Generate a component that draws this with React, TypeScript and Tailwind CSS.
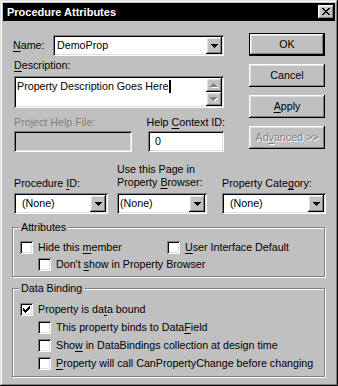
import React from 'react';

const raised =
  'shadow-[inset_-1px_-1px_0_#000,inset_1px_1px_0_#fff,inset_-2px_-2px_0_#808080,inset_2px_2px_0_#dfdfdf]';
const sunken =
  'shadow-[inset_1px_1px_0_#808080,inset_-1px_-1px_0_#fff,inset_2px_2px_0_#000,inset_-2px_-2px_0_#dfdfdf]';
const etched = 'border border-[#808080] shadow-[1px_1px_0_#fff,inset_1px_1px_0_#fff]';

function U({ children }: { children: React.ReactNode }) {
  return <span className="underline decoration-1 underline-offset-[2px]">{children}</span>;
}

function ArrowDown({ color = '#000' }: { color?: string }) {
  return (
    <svg width="7" height="4" viewBox="0 0 7 4" shapeRendering="crispEdges">
      <path d="M0 0h7v1H0zM1 1h5v1H1zM2 2h3v1H2zM3 3h1v1H3z" fill={color} />
    </svg>
  );
}

function GrayArrow({ up }: { up?: boolean }) {
  const d = up ? 'M3 0h1v1H3zM2 1h3v1H2zM1 2h5v1H1zM0 3h7v1H0z' : 'M0 0h7v1H0zM1 1h5v1H1zM2 2h3v1H2zM3 3h1v1H3z';
  return (
    <svg width="8" height="5" viewBox="0 0 8 5" shapeRendering="crispEdges">
      <path d={d} fill="#fff" transform="translate(1 1)" />
      <path d={d} fill="#808080" />
    </svg>
  );
}

function Combo({ value, className, textClass }: { value: string; className: string; textClass: string }) {
  return (
    <div className={`flex h-[21px] bg-white p-[2px] ${sunken} ${className}`}>
      <div className={`flex flex-1 items-center ${textClass}`}>{value}</div>
      <div className={`flex w-[16px] items-center justify-center bg-[#c0c0c0] ${raised}`}>
        <ArrowDown />
      </div>
    </div>
  );
}

function Check({ checked, children, className = '' }: { checked?: boolean; children: React.ReactNode; className?: string }) {
  return (
    <div className={`flex h-[17px] items-center ${className}`}>
      <div className={`flex h-[13px] w-[13px] shrink-0 items-center justify-center bg-white ${sunken}`}>
        {checked && (
          <svg width="7" height="7" viewBox="0 0 7 7" shapeRendering="crispEdges">
            <path
              d="M6 0h1v1H6zM5 1h2v1H5zM0 2h1v1H0zM4 2h3v1H4zM0 3h2v1H0zM3 3h3v1H3zM0 4h5v1H0zM1 5h3v1H1zM2 6h1v1H2z"
              fill="#000"
            />
          </svg>
        )}
      </div>
      <span className="ml-[5px] whitespace-nowrap">{children}</span>
    </div>
  );
}

function Button({ children, isDefault, disabled }: { children: React.ReactNode; isDefault?: boolean; disabled?: boolean }) {
  return (
    <div className={`h-[23px] w-[76px] ${isDefault ? 'border border-black' : ''}`}>
      <div
        className={`flex h-full w-full items-center justify-center bg-[#c0c0c0] ${raised} ${
          disabled ? 'text-[#808080] [text-shadow:1px_1px_0_#fff]' : ''
        }`}
      >
        {children}
      </div>
    </div>
  );
}

export default function App() {
  return (
    <div
      className={`h-[386px] w-[338px] bg-[#c0c0c0] p-[3px] font-['Liberation_Sans',Arial,sans-serif] text-[10.7px] leading-[13px] text-black shadow-[inset_-1px_-1px_0_#000,inset_1px_1px_0_#dfdfdf,inset_-2px_-2px_0_#808080,inset_2px_2px_0_#fff]`}
    >
      {/* title bar */}
      <div className="flex h-[18px] items-center bg-black pl-[4px] pr-[1px]">
        <span className="flex-1 text-[11px] font-bold text-white">Procedure Attributes</span>
        <div className={`flex h-[14px] w-[16px] items-center justify-center bg-[#c0c0c0] ${raised}`}>
          <svg width="8" height="7" viewBox="0 0 8 7" shapeRendering="crispEdges" className="-mt-px">
            <path
              d="M0 0h2v1H0zM6 0h2v1H6zM1 1h2v1H1zM5 1h2v1H5zM2 2h4v1H2zM3 3h2v1H3zM2 4h4v1H2zM1 5h2v1H1zM5 5h2v1H5zM0 6h2v1H0zM6 6h2v1H6z"
              fill="#000"
            />
          </svg>
        </div>
      </div>

      {/* top section */}
      <div className="mt-[12px] flex pl-[11px]">
        <div className="w-[211px]">
          <div className="mt-[2px] flex h-[21px] items-center">
            <span className="-ml-px w-[40px]">
              <U>N</U>ame:
            </span>
            <Combo value="DemoProp" className="w-[171px]" textClass="pl-[2px]" />
          </div>
          <div className="mt-[3px]">
            <U>D</U>escription:
          </div>
          <div className={`mt-[4px] flex h-[32px] w-[210px] bg-white p-[2px] ${sunken}`}>
            <div className="flex flex-1 items-start pl-[1px] pt-[2px]">
              <span>Property Description Goes Here</span>
              <span className="ml-px h-[13px] w-[2px] bg-black" />
            </div>
            <div className="flex w-[16px] flex-col">
              <div className={`flex h-[14px] items-center justify-center bg-[#c0c0c0] ${raised}`}>
                <GrayArrow up />
              </div>
              <div className={`flex h-[14px] items-center justify-center bg-[#c0c0c0] ${raised}`}>
                <GrayArrow />
              </div>
            </div>
          </div>
          <div className="mt-[8px] flex whitespace-nowrap">
            <span className="w-[134px] text-[#808080]">Project Help File:</span>
            <span>
              Help <U>C</U>ontext ID:
            </span>
          </div>
          <div className="mt-[2px] flex">
            <div className={`h-[21px] w-[118px] bg-[#c0c0c0] ${sunken}`} />
            <div className={`ml-[16px] flex h-[21px] w-[76px] items-center bg-white pl-[7px] ${sunken}`}>0</div>
          </div>
        </div>

        <div className="ml-[24px] flex flex-col gap-[8px]">
          <Button isDefault>OK</Button>
          <Button>Cancel</Button>
          <Button>
            <span>
              <U>A</U>pply
            </span>
          </Button>
          <Button disabled>
            <span>
              Ad<U>v</U>anced &gt;&gt;
            </span>
          </Button>
        </div>
      </div>

      {/* combo row */}
      <div className="mt-[11px] flex pl-[11px]">
        <div className="flex w-[94px] flex-col">
          <div className="flex h-[27px] items-end whitespace-nowrap">
            <span>
              Procedure <U>I</U>D:
            </span>
          </div>
          <Combo value="(None)" className="mt-[3px] w-[94px]" textClass="pl-[6px]" />
        </div>
        <div className="ml-[9px] flex w-[90px] flex-col">
          <div className="h-[27px] whitespace-nowrap">
            Use this Page in
            <br />
            Property <U>B</U>rowser:
          </div>
          <Combo value="(None)" className="mt-[3px] w-[90px]" textClass="pl-[1px]" />
        </div>
        <div className="ml-[15px] flex w-[104px] flex-col">
          <div className="flex h-[27px] items-end whitespace-nowrap">
            <span>
              Property Cate<U>g</U>ory:
            </span>
          </div>
          <Combo value="(None)" className="mt-[3px] w-[104px]" textClass="pl-[6px]" />
        </div>
      </div>

      {/* Attributes */}
      <div className={`relative ml-[9px] mt-[13px] h-[50px] w-[313px] pl-[7px] pt-[11px] ${etched}`}>
        <span className="absolute -top-[7px] left-[6px] bg-[#c0c0c0] px-[2px]">Attributes</span>
        <div className="flex">
          <Check className="w-[147px]">
            Hide this <U>m</U>ember
          </Check>
          <Check>
            <U>U</U>ser Interface Default
          </Check>
        </div>
        <Check className="ml-[18px]">
          Don't <U>s</U>how in Property Browser
        </Check>
      </div>

      {/* Data Binding */}
      <div className={`relative ml-[9px] mt-[11px] h-[89px] w-[313px] pl-[7px] pt-[12px] ${etched}`}>
        <span className="absolute -top-[7px] left-[6px] bg-[#c0c0c0] px-[2px]">Data Binding</span>
        <div className="flex flex-col gap-[1px]">
          <Check checked>
            Property is da<U>t</U>a bound
          </Check>
          <Check className="ml-[18px]">
            This property binds to Data<U>F</U>ield
          </Check>
          <Check className="ml-[18px]">
            Sho<U>w</U> in DataBindings collection at design time
          </Check>
          <Check className="ml-[18px]">
            <U>P</U>roperty will call CanPropertyChange before changing
          </Check>
        </div>
      </div>
    </div>
  );
}
